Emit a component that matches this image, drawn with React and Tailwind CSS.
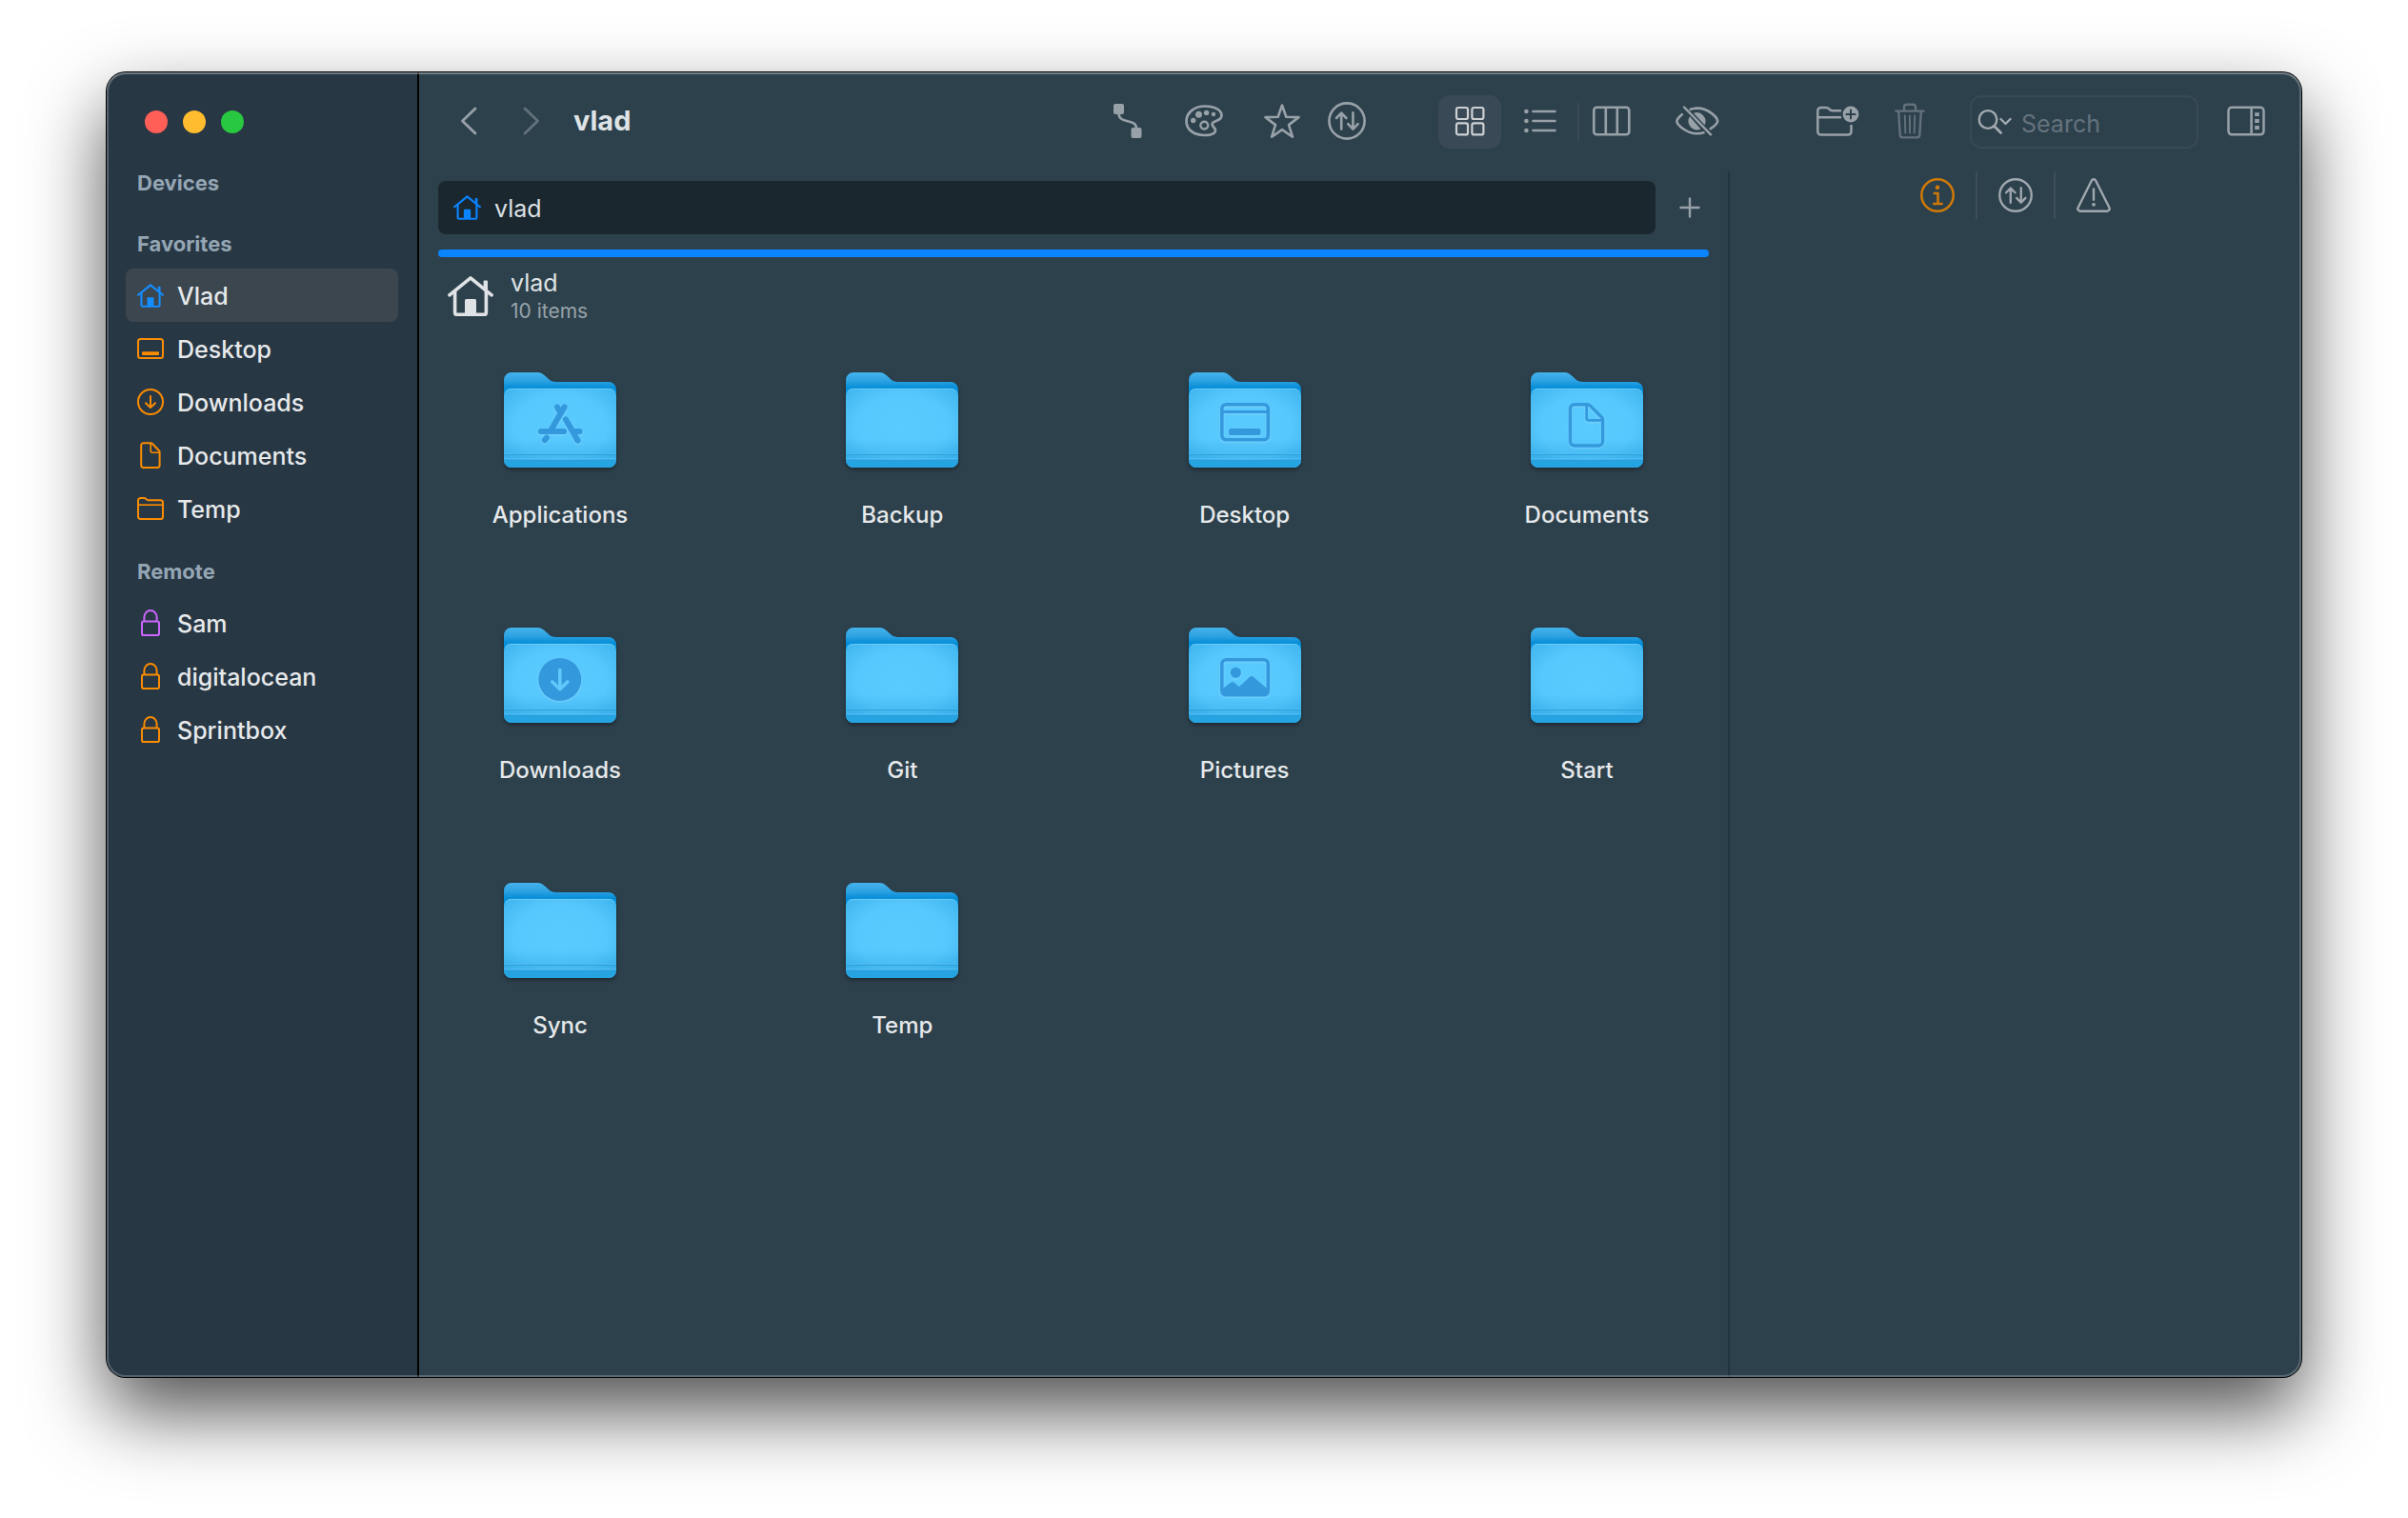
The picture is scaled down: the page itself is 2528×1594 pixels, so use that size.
import React, { useState } from 'react';

const HomeIcon = ({ className }) => (
  <svg viewBox="0 0 48 42" className={className} fill="none" stroke="currentColor" strokeWidth="3.6" strokeLinecap="round" strokeLinejoin="round">
    <path d="M1.9 19.8 24 1.9 46.1 19.8" />
    <path d="M7.6 16v22.2a2.2 2.2 0 0 0 2.2 2.2h28.4a2.2 2.2 0 0 0 2.2-2.2V16" />
    <path d="M37.6 5.4a1 1 0 0 1 1-1h2.4a1 1 0 0 1 1 1V17l-4.4-3.6z" fill="currentColor" stroke="none" />
    <path d="M18 25.5a1.5 1.5 0 0 1 1.5-1.5h9a1.5 1.5 0 0 1 1.5 1.5V41H18z" fill="currentColor" stroke="none" />
  </svg>
);

const DesktopIcon = () => (
  <svg viewBox="0 0 28 22" className="h-[22px] w-7" fill="none" stroke="currentColor" strokeWidth="2">
    <rect x="1" y="1" width="26" height="20" rx="2.5" />
    <rect x="5" y="14.2" width="18" height="3.8" rx="1" fill="currentColor" stroke="none" />
  </svg>
);

const DownloadIcon = () => (
  <svg viewBox="0 0 28 28" className="size-7" fill="none" stroke="currentColor" strokeWidth="2" strokeLinecap="round" strokeLinejoin="round">
    <circle cx="14" cy="14" r="13" />
    <path d="M14 8v12M9 15.2l5 4.9 5-4.9" />
  </svg>
);

const DocumentIcon = () => (
  <svg viewBox="0 0 22 28" className="h-7 w-[22px]" fill="none" stroke="currentColor" strokeWidth="2" strokeLinejoin="round">
    <path d="M3.6 1.2h7.8a2 2 0 0 1 1.4.6l7.2 7.4a2 2 0 0 1 .6 1.4v14a2.4 2.4 0 0 1-2.4 2.4H3.6a2.4 2.4 0 0 1-2.4-2.4v-21a2.4 2.4 0 0 1 2.4-2.4Z" />
    <path d="M11.2 1.4v8.4a1.4 1.4 0 0 0 1.4 1.4h7.8" strokeWidth="1.6" />
  </svg>
);

const FolderIcon = () => (
  <svg viewBox="0 0 28 24" className="h-6 w-7" fill="none" stroke="currentColor" strokeWidth="2" strokeLinejoin="round">
    <path d="M1 3.6A2.6 2.6 0 0 1 3.6 1h3.6c1.4 0 1.8.6 2.6 1.4.6.6 1 .9 2 .9h12.6A2.6 2.6 0 0 1 27 5.9v14.5a2.6 2.6 0 0 1-2.6 2.6H3.6A2.6 2.6 0 0 1 1 20.4Z" />
    <path d="M1 8.2h26" strokeWidth="1.6" />
  </svg>
);

const LockIcon = () => (
  <svg viewBox="0 0 20 28" className="h-7 w-5" fill="none" stroke="currentColor" strokeWidth="2">
    <path d="M3.4 12V8.200a6.600 7.200 0 0 1 13.200 0V12" />
    <rect x="1" y="12.4" width="18" height="14.6" rx="1.8" />
  </svg>
);

const SwapIcon = ({ className }) => (
  <svg viewBox="0 0 40 40" className={className} fill="none" stroke="currentColor" strokeWidth="2.6" strokeLinecap="round" strokeLinejoin="round">
    <circle cx="20" cy="20" r="18.6" />
    <path d="M14.2 28.6V12M9 17l5.2-5.4L19.4 17M26.4 11.4V28M21.200 23.200l5.200 5.400 5.200-5.400" />
  </svg>
);

const ConnectIcon = () => (
  <svg viewBox="0 0 30 36" className="h-9 w-[30px]" fill="currentColor">
    <rect width="11" height="11" rx="2" />
    <rect x="18.5" y="25" width="11" height="11" rx="2" />
    <path d="M5.500 10c0 12 18.500 4.500 18.500 16" fill="none" stroke="currentColor" strokeWidth="2.6" />
  </svg>
);

const PaletteIcon = () => (
  <svg viewBox="0 0 40 34" className="h-[34px] w-10" fill="none" stroke="currentColor" strokeWidth="2.7" strokeLinejoin="round">
    <path d="M21 1.500C9.500 1.500 1.500 8.500 1.500 17.500 1.500 26 9.500 32 20 32c6.500 0 12-1.700 12-5.200 0-2.500-3.400-3.600-3.400-6.300 0-4.500 9.900-2.300 9.900-9.200C38.500 5.300 31 1.500 21 1.500Z" />
    <circle cx="20.3" cy="21.6" r="3.9" strokeWidth="2.4" />
    <g fill="currentColor" stroke="none">
      <circle cx="8.700" cy="16.500" r="2.7" />
      <circle cx="14.500" cy="10.300" r="3.5" />
      <circle cx="22.600" cy="8.400" r="2.7" />
      <circle cx="30" cy="10" r="2.2" />
    </g>
  </svg>
);

const StarIcon = () => (
  <svg viewBox="0 0 38 36" className="h-9 w-[38px]" fill="none" stroke="currentColor" strokeWidth="2.6" strokeLinejoin="round">
    <path d="M19 1.500l4.300 12.300 13.200.3-10.500 8 3.900 12.600L19 27.100 8.100 34.700 12 22.100l-10.500-8 13.200-.3z" />
  </svg>
);

const GridIcon = () => (
  <svg viewBox="0 0 32 32" className="size-8" fill="none" stroke="currentColor" strokeWidth="2.2">
    <rect x="2" y="2" width="12" height="12" rx="2" />
    <rect x="18.4" y="2" width="12" height="12" rx="2" />
    <rect x="2" y="18.4" width="12" height="12" rx="2" />
    <rect x="18.4" y="18.4" width="12" height="12" rx="2" />
  </svg>
);

const ListIcon = () => (
  <svg viewBox="0 0 34 26" className="h-[26px] w-[34px]" fill="none" stroke="currentColor" strokeWidth="2.6" strokeLinecap="round">
    <path d="M9.500 3h23M9.500 13h23M9.500 23h23" />
    <g fill="currentColor" stroke="none">
      <circle cx="2.400" cy="3" r="2.3" />
      <circle cx="2.400" cy="13" r="2.3" />
      <circle cx="2.400" cy="23" r="2.3" />
    </g>
  </svg>
);

const ColumnsIcon = () => (
  <svg viewBox="0 0 40 32" className="h-8 w-10" fill="none" stroke="currentColor" strokeWidth="2.6">
    <rect x="1.3" y="1.8" width="37" height="28.500" rx="3" />
    <path d="M13.800 2v28M25.800 2v28" />
  </svg>
);

const HiddenIcon = () => (
  <svg viewBox="0 0 46 32" className="h-8 w-[46px]" fill="none" stroke="currentColor" strokeWidth="2.6" strokeLinecap="round">
    <path d="M6.800 9.200C3.500 12 1.400 14.800 1.400 16.300 1.400 19.500 11 29.300 23 29.300c2.300 0 4.500-.4 6.500-1" />
    <path d="M15.800 3.800c2.200-.8 4.700-1.200 7.200-1.200 12 0 21.200 10.200 21.200 13.700 0 1.700-3 5-7.400 7.900" />
    <path d="M15 11.300A9.200 9.200 0 0 0 26.500 24.600Z" fill="currentColor" stroke="none" />
    <path d="M19 7.800A9.200 9.200 0 0 1 30.600 20.300Z" fill="currentColor" stroke="none" />
    <path d="M9 1.500 37 30.300" strokeWidth="2.4" />
  </svg>
);

const NewFolderIcon = () => (
  <svg viewBox="0 0 46 32" className="h-8 w-[46px]" fill="none" stroke="currentColor" strokeWidth="2.5" strokeLinejoin="round">
    <path d="M26 5.200H16.500c-1.500 0-2-.4-3-1.500-1-1.200-1.600-1.800-3.300-1.800H4.600a3.300 3.300 0 0 0-3.300 3.300v22a3.300 3.300 0 0 0 3.300 3.300h28.600a3.300 3.300 0 0 0 3.300-3.300V20" />
    <path d="M1.500 12.200h24.500" />
    <circle cx="36" cy="9" r="8.4" fill="currentColor" stroke="none" />
    <path d="M36 4.400v9.200M31.400 9h9.200" stroke="#2d414c" strokeLinecap="round" strokeWidth="2" />
  </svg>
);

const TrashIcon = () => (
  <svg viewBox="0 0 32 38" className="h-[38px] w-8" fill="none" stroke="currentColor" strokeWidth="2.4" strokeLinecap="round" strokeLinejoin="round">
    <path d="M1.400 8.600h29.200M10 8V4.400a2.600 2.600 0 0 1 2.600-2.600h6.800A2.600 2.600 0 0 1 22 4.400V8" />
    <path d="M4.200 9l1.500 24.600a3 3 0 0 0 3 2.800h14.600a3 3 0 0 0 3-2.800L27.800 9" />
    <path d="M10.800 13.500l.5 18M16 13.500v18M21.200 13.500l-.5 18" strokeWidth="1.9" />
  </svg>
);

const SearchIcon = () => (
  <svg viewBox="0 0 36 28" className="h-7 w-9" fill="none" stroke="currentColor" strokeWidth="2.3" strokeLinecap="round" strokeLinejoin="round">
    <circle cx="11" cy="11.500" r="9.3" />
    <path d="M17.600 18.400l7 7" strokeWidth="2.8" />
    <path d="M24.500 11l5 5 5-5" />
  </svg>
);

const PanelIcon = () => (
  <svg viewBox="0 0 40 32" className="h-8 w-10" fill="none" stroke="currentColor" strokeWidth="2.5">
    <rect x="1.5" y="1.8" width="37" height="28.500" rx="3.5" />
    <path d="M25.600 2v28" />
    <path d="M29.200 7.300h4.600v3.800h-4.600zM29.200 14.100h4.600v3.800h-4.600zM29.200 21.100h4.600v3.800h-4.600z" fill="currentColor" stroke="none" />
  </svg>
);

const InfoIcon = () => (
  <svg viewBox="0 0 36 36" className="size-9" fill="none" stroke="currentColor" strokeWidth="2.5" strokeLinecap="round" strokeLinejoin="round">
    <circle cx="18" cy="18" r="16.7" />
    <circle cx="18" cy="9.800" r="2.3" fill="currentColor" stroke="none" />
    <path d="M14.800 16h3.700v11M14.200 27h8.400" />
  </svg>
);

const WarningIcon = () => (
  <svg viewBox="0 0 36 36" className="size-9" fill="none" stroke="currentColor" strokeWidth="2.4" strokeLinecap="round" strokeLinejoin="round">
    <path d="M15.900 2.500a2.400 2.400 0 0 1 4.200 0L34.400 31a2.500 2.500 0 0 1-2.200 3.700H3.800A2.500 2.500 0 0 1 1.600 31Z" />
    <path d="M18 11.500v11.300" />
    <circle cx="18" cy="27.800" r="1.9" fill="currentColor" stroke="none" />
  </svg>
);

// Symbols stamped on the front of a folder
const glyphs = {
  apps: (
    <g strokeWidth="6.2" strokeLinecap="round">
      <path d="M63.500 36.500 49.500 60.500M56 36.500 58.500 41M39 62h24M65 49.500l12.500 22M73 62h6.500M44.800 68.800 43 71.200" />
    </g>
  ),
  desktop: (
    <g strokeWidth="3.6">
      <rect x="34.8" y="33.8" width="48.5" height="37" rx="4.5" />
      <path d="M35 41.500h48" strokeWidth="2.8" />
      <rect x="42" y="59" width="33.5" height="7" rx="2" fill="#3499dc" stroke="none" />
    </g>
  ),
  documents: (
    <g strokeWidth="3.4" strokeLinejoin="round">
      <path d="M46 33.700h13.500a4 4 0 0 1 2.800 1.200L74.400 47a4 4 0 0 1 1.200 2.800v22.700a4.500 4.500 0 0 1-4.500 4.500H46a4.500 4.500 0 0 1-4.500-4.500V38.200a4.500 4.500 0 0 1 4.500-4.500Z" />
      <path d="M58.700 34v14.300a2 2 0 0 0 2 2h15" strokeWidth="2.8" />
    </g>
  ),
  downloads: (
    <g strokeLinecap="round" strokeLinejoin="round">
      <circle cx="58.8" cy="54.5" r="22.5" fill="#3499dc" stroke="none" />
      <path d="M58.800 44.500V64M50.800 57l8 7.600 8-7.600" stroke="#60c8fb" strokeWidth="3.6" />
    </g>
  ),
  pictures: (
    <g strokeWidth="3.6">
      <rect x="34.8" y="33.8" width="48.5" height="37" rx="4.5" />
      <circle cx="49.3" cy="47.3" r="5.6" fill="#3499dc" stroke="none" />
      <path d="M35 64.500l8.600-6.600a3.400 3.400 0 0 1 4.300 0l5 4.100 10.600-9.800a3.600 3.600 0 0 1 5 0L83.300 65v3.500a3 3 0 0 1-3 3H38a3 3 0 0 1-3-3Z" fill="#3499dc" stroke="none" />
    </g>
  ),
};

const FolderDefs = () => (
  <svg className="absolute size-0" aria-hidden="true">
    <defs>
      <linearGradient id="folder-back" x1="0" y1="0" x2="0" y2="1">
        <stop offset="0" stopColor="#45b3ec" />
        <stop offset="0.1" stopColor="#2ea2e2" />
        <stop offset="0.18" stopColor="#078fd8" />
        <stop offset="1" stopColor="#1e9ade" />
      </linearGradient>
      <radialGradient id="folder-front" cx="0.5" cy="0.48" r="0.68">
        <stop offset="0" stopColor="#5acbfe" />
        <stop offset="0.6" stopColor="#57c8fd" />
        <stop offset="1" stopColor="#3fb4ee" />
      </radialGradient>
      <linearGradient id="folder-foot" x1="0" y1="0" x2="0" y2="1">
        <stop offset="0" stopColor="#1e9bdb" stopOpacity="0" />
        <stop offset="1" stopColor="#1e9bdb" stopOpacity="0.5" />
      </linearGradient>
    </defs>
  </svg>
);

const Folder = ({ glyph }) => (
  <svg viewBox="0 0 118 100" className="h-[100px] w-[118px] drop-shadow-[0_2px_2px_rgba(0,0,0,0.4)]" fill="none" stroke="#3499dc">
    <path d="M0 8a8 8 0 0 1 8-8h26c5 0 7 1.500 10 4.200l3 2.800c2.500 2.300 4.500 3 8 3h55a8 8 0 0 1 8 8v70H0Z" fill="url(#folder-back)" stroke="none" />
    <rect y="17" width="118" height="83" rx="8" fill="url(#folder-front)" stroke="none" />
    <path d="M1.500 20.500A7.500 7.500 0 0 1 8 17.400h102a7.500 7.500 0 0 1 6.500 3.100" stroke="#74cffa" strokeWidth="0.8" />
    <path d="M0 70h118v22a8 8 0 0 1-8 8H8a8 8 0 0 1-8-8Z" fill="url(#folder-foot)" stroke="none" />
    <path d="M0 93h118a8 8 0 0 1-8 7H8a8 8 0 0 1-8-7Z" fill="#26a3e1" stroke="none" />
    <path d="M0 86.500h118M0 92.500h118" stroke="#2b9fdc" strokeWidth="1" />
    <path d="M0 85.300h118M0 90.500h118" stroke="#5cc3f5" strokeOpacity="0.6" strokeWidth="1" />
    {glyph && <g className="drop-shadow-[0_1px_1px_rgba(140,215,255,0.7)]">{glyphs[glyph]}</g>}
  </svg>
);

const favorites = [
  { name: 'Vlad', icon: <HomeIcon className="h-[25px] w-7" />, color: 'text-[#148dff]' },
  { name: 'Desktop', icon: <DesktopIcon />, color: 'text-[#fb8c00]' },
  { name: 'Downloads', icon: <DownloadIcon />, color: 'text-[#fb8c00]' },
  { name: 'Documents', icon: <DocumentIcon />, color: 'text-[#fb8c00]' },
  { name: 'Temp', icon: <FolderIcon />, color: 'text-[#fb8c00]' },
];

const remotes = [
  { name: 'Sam', icon: <LockIcon />, color: 'text-[#cc66ff]' },
  { name: 'digitalocean', icon: <LockIcon />, color: 'text-[#fb8c00]' },
  { name: 'Sprintbox', icon: <LockIcon />, color: 'text-[#fb8c00]' },
];

const files = [
  { name: 'Applications', glyph: 'apps' },
  { name: 'Backup' },
  { name: 'Desktop', glyph: 'desktop' },
  { name: 'Documents', glyph: 'documents' },
  { name: 'Downloads', glyph: 'downloads' },
  { name: 'Git' },
  { name: 'Pictures', glyph: 'pictures' },
  { name: 'Start' },
  { name: 'Sync' },
  { name: 'Temp' },
];

const SidebarSection = ({ title, items = [], selected, onSelect }) => (
  <section>
    <h2 className="flex h-[54px] items-center pt-[2px] pl-3 text-[22px] font-bold text-[#94a6b4]">{title}</h2>
    <ul>
      {items.map((item) => (
        <li key={item.name}>
          <button
            type="button"
            onClick={() => onSelect(item.name)}
            className={`flex h-14 w-full items-center gap-[14px] rounded-lg pl-3 text-left text-[25px] font-medium ${
              selected === item.name ? 'bg-[#3b464f]' : ''
            }`}
          >
            <span className={`flex w-7 justify-center ${item.color}`}>{item.icon}</span>
            <span className="pt-[3px]">{item.name}</span>
          </button>
        </li>
      ))}
    </ul>
  </section>
);

const ToolButton = ({ label, className = '', children }) => (
  <button type="button" aria-label={label} className={`flex h-14 shrink-0 items-center justify-center pb-[2px] ${className}`}>
    {children}
  </button>
);

const App = () => {
  const [selected, setSelected] = useState('Vlad');
  const [search, setSearch] = useState('');

  return (
    <div className="flex min-h-screen overflow-hidden bg-white px-28 pt-[76px] pb-[148px] font-['Inter','Liberation_Sans',sans-serif] text-[#e6e9eb]">
      <FolderDefs />
      <div className="relative flex flex-1 rounded-[20px] bg-[#2d414c] shadow-[0_0_0_1px_#000,0_36px_80px_rgba(0,0,0,0.69)]">
        {/* Sidebar */}
        <aside className="w-[328px] shrink-0 rounded-l-[20px] border-r-2 border-black bg-[#283744] px-5">
          <div className="flex gap-4 pt-10 pb-6 pl-5">
            <button type="button" aria-label="Close" className="size-6 rounded-full bg-[#ff5f57]" />
            <button type="button" aria-label="Minimize" className="size-6 rounded-full bg-[#febc2e]" />
            <button type="button" aria-label="Zoom" className="size-6 rounded-full bg-[#28c840]" />
          </div>
          <nav className="flex flex-col gap-[10px]">
            <SidebarSection title="Devices" />
            <SidebarSection title="Favorites" items={favorites} selected={selected} onSelect={setSelected} />
            <SidebarSection title="Remote" items={remotes} selected={selected} onSelect={setSelected} />
          </nav>
        </aside>

        <div className="flex min-w-0 flex-1 flex-col">
          {/* Toolbar */}
          <header className="flex h-[104px] items-center pr-[38px] pl-8 text-[#98a1a8]">
            <ToolButton label="Back" className="w-10">
              <svg viewBox="0 0 18 30" className="h-[30px] w-[18px]" fill="none" stroke="currentColor" strokeWidth="2.8" strokeLinecap="round" strokeLinejoin="round">
                <path d="M16 2 2.500 15 16 28" />
              </svg>
            </ToolButton>
            <ToolButton label="Forward" className="ml-[26px] w-10 text-[#63717b]">
              <svg viewBox="0 0 18 30" className="h-[30px] w-[18px]" fill="none" stroke="currentColor" strokeWidth="2.8" strokeLinecap="round" strokeLinejoin="round">
                <path d="M2 2l13.500 13L2 28" />
              </svg>
            </ToolButton>
            <h1 className="ml-6 pb-[2px] text-[29px] font-bold text-[#dfe3e5]">vlad</h1>

            <div className="ml-auto flex gap-[42px]">
              <div className="flex gap-10">
                <ToolButton label="Connect" className="w-10"><ConnectIcon /></ToolButton>
                <ToolButton label="Theme" className="w-10"><PaletteIcon /></ToolButton>
              </div>
              <div className="flex gap-7">
                <ToolButton label="Favorite" className="w-10"><StarIcon /></ToolButton>
                <ToolButton label="Transfers" className="w-10"><SwapIcon className="size-10" /></ToolButton>
              </div>
            </div>

            <div className="ml-[76px] flex items-center">
              <ToolButton label="Icon view" className="w-[66px] rounded-xl bg-[#394955] text-[#ced1d4]"><GridIcon /></ToolButton>
              <ToolButton label="List view" className="ml-2 w-[66px]"><ListIcon /></ToolButton>
              <span className="ml-[6px] h-10 w-[2px] bg-[#394a56]" />
              <ToolButton label="Column view" className="w-[68px]"><ColumnsIcon /></ToolButton>
            </div>
            <ToolButton label="Hidden files" className="ml-[33px] w-[46px]"><HiddenIcon /></ToolButton>

            <ToolButton label="New folder" className="ml-[102px] w-[46px]"><NewFolderIcon /></ToolButton>
            <ToolButton label="Delete" className="ml-9 w-8 text-[#63717b]"><TrashIcon /></ToolButton>

            <div className="ml-[47px] flex h-14 w-60 shrink-0 items-center rounded-xl border-2 border-[#374954] pl-[6px]">
              <label htmlFor="search" aria-label="Search" className="shrink-0 text-[#a3abb1]">
                <SearchIcon />
              </label>
              <input
                id="search"
                type="text"
                placeholder="Search"
                value={search}
                onChange={(e) => setSearch(e.target.value)}
                className="ml-[10px] w-full min-w-0 bg-transparent pt-[6px] text-[25px] outline-none placeholder:text-[#64727c]"
              />
            </div>
            <ToolButton label="Inspector" className="ml-[30px] w-10"><PanelIcon /></ToolButton>
          </header>

          <div className="flex flex-1">
            <main className="min-w-0 flex-1 px-5 pt-[10px]">
              {/* Tabs */}
              <div className="flex">
                <button type="button" className="flex h-14 flex-1 items-center gap-[14px] rounded-lg bg-[#1b272f] pl-4 text-[25px] text-[#dde1e4]">
                  <HomeIcon className="h-7 w-[29px] text-[#0a84ff]" />
                  <span className="pt-[3px]">vlad</span>
                </button>
                <ToolButton label="New tab" className="ml-4 w-10 text-[#98a1a8]">
                  <svg viewBox="0 0 22 22" className="mt-[2px] size-[22px]" fill="none" stroke="currentColor" strokeWidth="2.4" strokeLinecap="round">
                    <path d="M11 1.500v19M1.500 11h19" />
                  </svg>
                </ToolButton>
              </div>
              <div className="mt-4 h-2 rounded-full bg-[#0a84ff]" />

              <div className="mt-[11px] flex items-center gap-[18px] pl-[10px]">
                <HomeIcon className="h-[42px] w-12 text-[#dfe3e5]" />
                <div>
                  <p className="text-[25px] leading-8 text-[#dfe3e5]">vlad</p>
                  <p className="text-[21px] leading-7 text-[#98a3aa]">10 items</p>
                </div>
              </div>

              {/* Files */}
              <ul className="mt-[50px] grid grid-cols-[repeat(4,256px)] justify-between gap-y-[102px]">
                {files.map((file) => (
                  <li key={file.name} className="flex justify-center">
                    <button type="button" className="flex flex-col items-center gap-[34px]">
                      <Folder glyph={file.glyph} />
                      <span className="text-[24px] leading-8 font-medium">{file.name}</span>
                    </button>
                  </li>
                ))}
              </ul>
            </main>

            {/* Inspector */}
            <aside className="w-[602px] shrink-0 border-l-2 border-[#233441]">
              <div className="flex h-[50px] justify-center text-[#a0a7ae]">
                <button type="button" aria-label="Info" className="flex w-20 items-center justify-center text-[#d07a06]">
                  <InfoIcon />
                </button>
                <button type="button" aria-label="Transfers" className="flex w-[84px] items-center justify-center border-x-2 border-[#3d4d59]">
                  <SwapIcon className="size-9" />
                </button>
                <button type="button" aria-label="Warnings" className="flex w-20 items-center justify-center">
                  <WarningIcon />
                </button>
              </div>
            </aside>
          </div>
        </div>

        {/* Light rim along the window edge */}
        <div className="pointer-events-none absolute inset-0 rounded-[20px] shadow-[inset_0_0_0_2px_rgba(255,255,255,0.22),inset_0_2px_0_rgba(255,255,255,0.15)]" />
      </div>
    </div>
  );
};

export default App;
